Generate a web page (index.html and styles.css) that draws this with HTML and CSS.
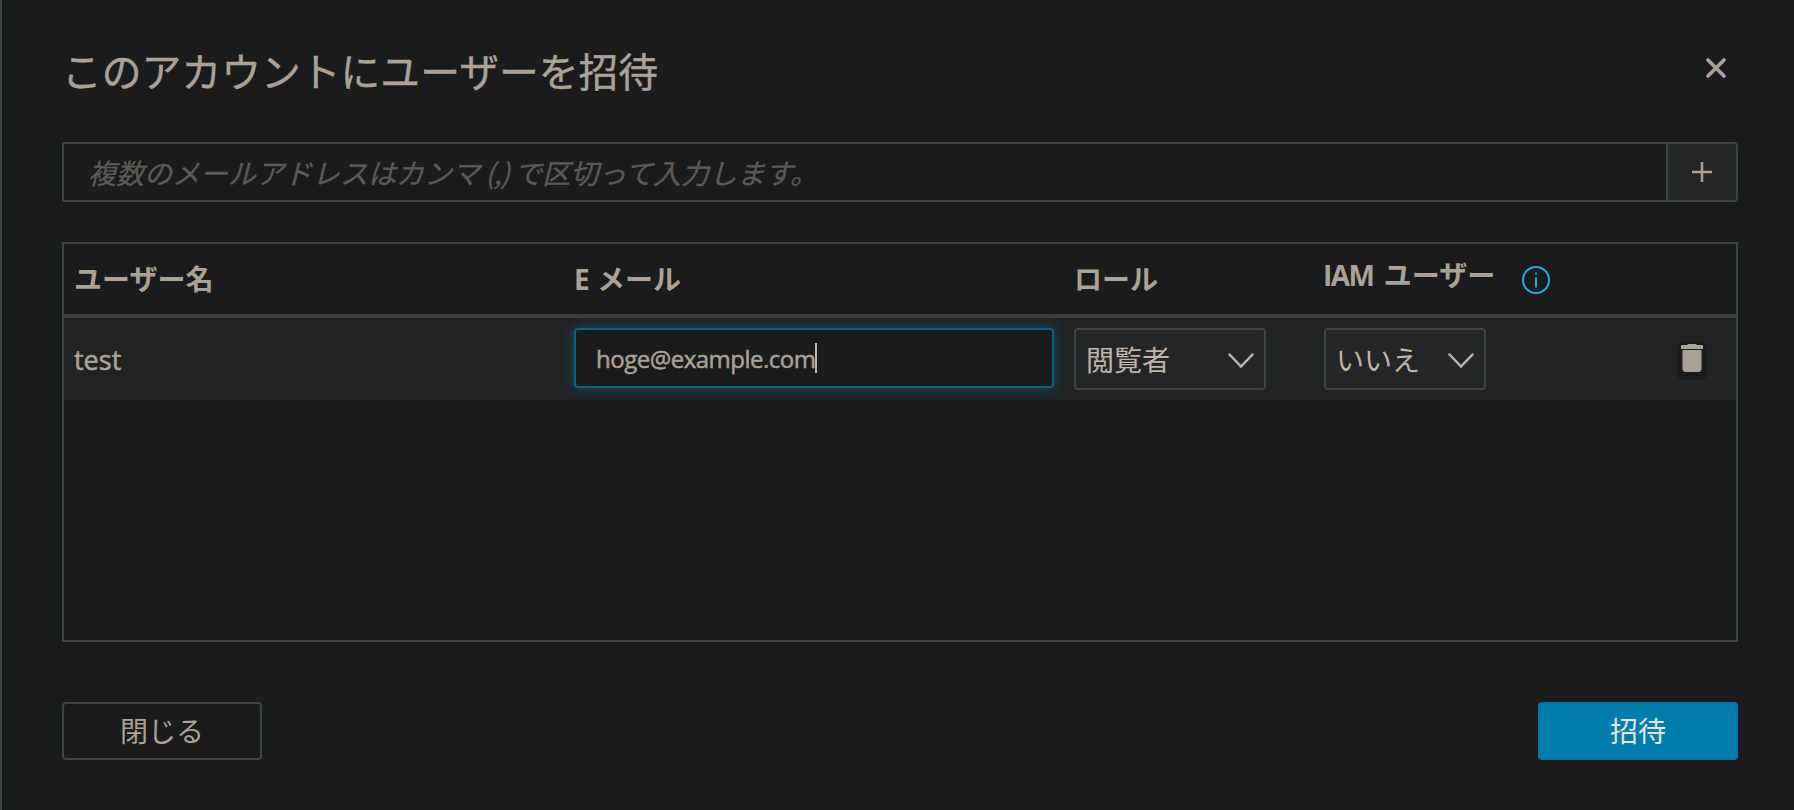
FILE: index.html
```
<!DOCTYPE html>
<html lang="ja">
<head>
<meta charset="utf-8">
<title>ユーザーを招待</title>
<link rel="stylesheet" href="styles.css">
</head>
<body>
<main class="dialog">
  <header class="dialog-header">
    <h1 class="title">このアカウントにユーザーを招待</h1>
    <button class="dismiss" aria-label="閉じる"><svg width="20" height="20" viewBox="0 0 20 20"><path d="M2 2l16 16M18 2L2 18"/></svg></button>
  </header>
  <div class="adder">
    <div class="adder-field"><span class="placeholder">複数のメールアドレスはカンマ<span class="comma"> (,) </span>で区切って入力します。</span></div>
    <button class="adder-button" aria-label="追加"><svg width="20" height="20" viewBox="0 0 20 20"><path d="M10 0v20M0 10h20"/></svg></button>
  </div>
  <section class="table">
    <div class="row head">
      <div>ユーザー名</div>
      <div>E メール</div>
      <div>ロール</div>
      <div class="iam"><span class="iam-label"><span class="latin-iam">IAM</span> ユーザー</span><svg class="info" width="28" height="28" viewBox="0 0 28 28"><circle cx="14" cy="14" r="13"/><path d="M14 11.5v10M14 6.5v2"/></svg></div>
      <div></div>
    </div>
    <div class="row user">
      <div class="name">test</div>
      <div class="email"><span class="email-text">hoge@example.com</span><span class="caret"></span></div>
      <div class="select role"><span>閲覧者</span><svg width="26" height="16" viewBox="0 0 26 16"><path d="M1.5 1.5L13 13.5L24.500 1.500"/></svg></div>
      <div class="select answer"><span>いいえ</span><svg width="26" height="16" viewBox="0 0 26 16"><path d="M1.5 1.5L13 13.5L24.500 1.500"/></svg></div>
      <button class="remove" aria-label="削除"><svg width="22" height="28" viewBox="0 0 22 28"><path d="M0 1h6l1-1h8l1 1h6v4H0zM1.500 6h19v20l-2 2h-15l-2-2z"/></svg></button>
    </div>
  </section>
  <footer class="actions">
    <button class="button">閉じる</button>
    <button class="button primary">招待</button>
  </footer>
</main>
</body>
</html>
```
FILE: styles.css
```
* { box-sizing: border-box; }
body {
  margin: 0;
  background: #1a1b1c;
  color: #aaa197;
  font: 28px/40px "Open Sans", "Noto Sans CJK JP", sans-serif;
  overflow: hidden;
}
button { font: inherit; color: inherit; background: none; border: 0; padding: 0; }
svg { display: block; fill: none; stroke: currentColor; }
.dialog {
  height: 810px;
  padding: 42px 56px 0 60px;
  border-left: 2px solid #3d4444;
  display: flex;
  flex-direction: column;
}
.dialog-header {
  height: 100px;
  display: flex;
  justify-content: space-between;
  align-items: flex-start;
}
.title {
  margin: -2px 0 0;
  font: 400 39.800px/60px "Noto Sans CJK JP", sans-serif;
  -webkit-text-stroke: .4px currentColor;
}
.dismiss { margin: 16px 12px 0 0; }
.dismiss svg { stroke-width: 3.700; stroke-linecap: round; }
.adder { height: 60px; display: flex; border: 2px solid #3d4444; border-radius: 2px 4px 4px 2px; }
.adder-field { flex: 1; padding: 8px 24px; color: #5d5955; font-style: italic; }
.placeholder {
  white-space: pre;
  font-family: "Noto Sans CJK JP", sans-serif;
  -webkit-text-stroke: .3px currentColor;
}
.comma { letter-spacing: -1px; }
.adder-button {
  width: 70px;
  border-left: 2px solid #3d4444;
  background: #232526;
  display: grid;
  place-items: center;
}
.adder-button svg { stroke-width: 2.500; }
.table { height: 400px; margin-top: 40px; border: 2px solid #3d4444; }
.row {
  display: grid;
  grid-template-columns: 500px 500px 250px 240px 1fr;
  padding: 0 10px;
}
.head { height: 74px; border-bottom: 4px solid #3c3d3f; font-weight: 700; line-height: 70px; }
.iam { width: 226px; display: flex; align-items: flex-start; }
.iam-label { line-height: 63px; white-space: nowrap; }
.latin-iam { margin: 0 3px 0 -1px; letter-spacing: -1.500px; }
.info { margin: 22px 0 0 auto; color: #24a9df; stroke-width: 2; flex: none; }
.user { height: 82px; padding-top: 10px; background: #202223; }
.name { font-size: 27px; line-height: 63px; -webkit-text-stroke: .6px currentColor; }
.email {
  width: 480px;
  height: 60px;
  padding-left: 20px;
  display: flex;
  align-items: center;
  background: #1a1b1c;
  border: 2px solid #076287;
  border-radius: 4px;
  box-shadow: 0 0 14px rgba(10, 120, 160, .5);
  font-size: 24px;
}
.email-text { letter-spacing: -.5px; padding-top: 1px; -webkit-text-stroke: .5px currentColor; }
.caret { width: 2px; height: 30px; background: #c0b8af; }
.select {
  height: 62px;
  padding: 0 10px;
  display: flex;
  align-items: center;
  justify-content: space-between;
  border: 2px solid #3d4444;
  border-radius: 4px;
  background: #232526;
  color: #beb5aa;
  font-family: "Noto Sans CJK JP", sans-serif;
}
.select svg { margin-top: 4px; stroke-width: 2.500; stroke-linecap: round; }
.role { width: 192px; }
.answer { width: 162px; }
.remove {
  justify-self: end;
  display: flex;
  align-items: flex-start;
  width: 28px;
  height: 38px;
  margin: 14px 20px 0 0;
  padding: 2px 3px 0;
  border-radius: 4px;
  background: #1a1b1c;
}
.remove svg { fill: #aaa197; stroke: none; }
.actions { margin-top: 60px; display: flex; justify-content: space-between; }
.button {
  width: 200px;
  height: 58px;
  padding-bottom: 2px;
  border: 2px solid #3d4444;
  border-radius: 4px;
  font-family: "Noto Sans CJK JP", sans-serif;
}
.primary { background: #007dad; border-color: #0773a0; color: #e5e3df; }
```
